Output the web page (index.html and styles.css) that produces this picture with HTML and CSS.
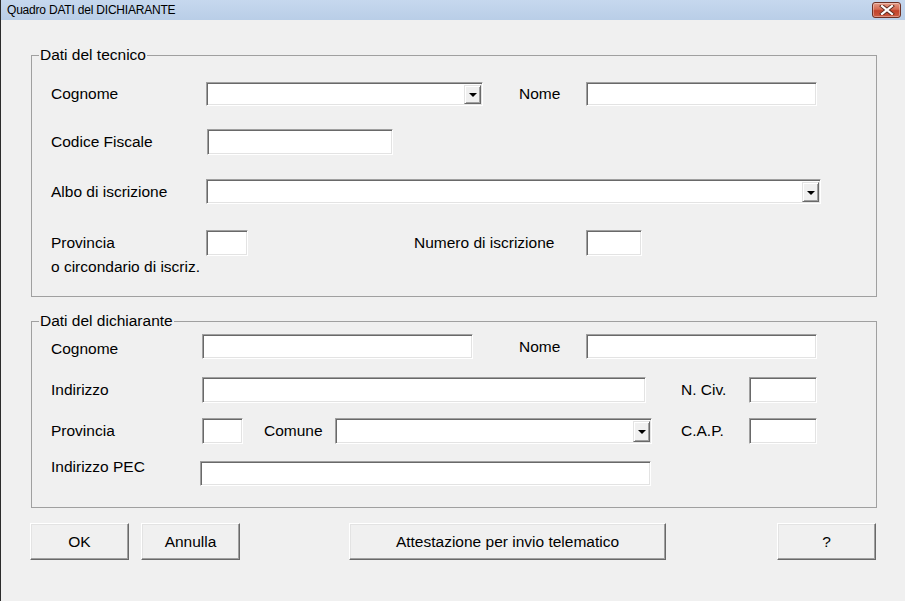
FILE: index.html
```html
<!DOCTYPE html>
<html>
<head>
<meta charset="utf-8">
<link rel="stylesheet" href="styles.css">
</head>
<body>
<div class="window">
  <div class="titlebar">
    <span class="title">Quadro DATI del DICHIARANTE</span>
    <span class="close"><svg width="16" height="10" viewBox="0 0 16 10"><path d="M3 1 L13 9 M13 1 L3 9" stroke="#5a2a20" stroke-width="4" stroke-linecap="square"/><path d="M3 1 L13 9 M13 1 L3 9" stroke="#fff" stroke-width="2.2" stroke-linecap="square"/></svg></span>
  </div>
  <div class="content">
    <div class="group g1">
      <div class="legend"><span>Dati del tecnico</span></div>
      <div class="row r1">
        <span class="lbl w155">Cognome</span>
        <div class="combo w277"><span class="drop"></span></div>
        <span class="lbl w67 ml36">Nome</span>
        <div class="field w231"></div>
      </div>
      <div class="row r2">
        <span class="lbl w156">Codice Fiscale</span>
        <div class="field w186"></div>
      </div>
      <div class="row r3">
        <span class="lbl w155">Albo di iscrizione</span>
        <div class="combo w615"><span class="drop"></span></div>
      </div>
      <div class="row r4">
        <span class="lbl2 w155">Provincia<br>o circondario di iscriz.</span>
        <div class="field w42"></div>
        <span class="lbl w172 ml166 lh26">Numero di iscrizione</span>
        <div class="field w56"></div>
      </div>
    </div>
    <div class="group g2">
      <div class="legend"><span>Dati del dichiarante</span></div>
      <div class="row s1">
        <span class="lbl w151 dn2">Cognome</span>
        <div class="field w271"></div>
        <span class="lbl w67 ml46">Nome</span>
        <div class="field w231"></div>
      </div>
      <div class="row s2">
        <span class="lbl w151">Indirizzo</span>
        <div class="field w444"></div>
        <span class="lbl w68 ml35">N. Civ.</span>
        <div class="field w68"></div>
      </div>
      <div class="row s3">
        <span class="lbl w151">Provincia</span>
        <div class="field w41"></div>
        <span class="lbl w71 ml21">Comune</span>
        <div class="combo w317"><span class="drop"></span></div>
        <span class="lbl w68 ml29">C.A.P.</span>
        <div class="field w68"></div>
      </div>
      <div class="row s4">
        <span class="lbl w149 up">Indirizzo PEC</span>
        <div class="field w451"></div>
      </div>
    </div>
    <div class="buttons">
      <button class="btn w99">OK</button>
      <button class="btn w99 ml12">Annulla</button>
      <button class="btn w317 ml109">Attestazione per invio telematico</button>
      <button class="btn w99 ml111">?</button>
    </div>
  </div>
</div>
</body>
</html>
```
FILE: styles.css
```css
* { box-sizing: border-box; }
html, body { margin: 0; padding: 0; }
body {
  width: 905px;
  height: 601px;
  overflow: hidden;
  background: #f0f0f0;
  font-family: "Liberation Sans", Arial, sans-serif;
  color: #000;
}
.window {
  width: 905px;
  height: 601px;
  border-left: 1px solid #2b2b2b;
  background: #f0f0f0;
}
.titlebar {
  height: 20px;
  background: linear-gradient(#c6d8ee, #b9cee7);
  display: flex;
  align-items: center;
  justify-content: space-between;
  padding-left: 6px;
  padding-right: 4px;
}
.title {
  font-family: "Liberation Sans", Arial, sans-serif;
  font-size: 12px;
  color: #000;
  letter-spacing: -0.2px;
}
.close {
  width: 29px;
  height: 16px;
  border: 1px solid #6e3024;
  border-radius: 3px;
  background: linear-gradient(#e59c88 0%, #d46a52 45%, #c2422a 55%, #cc5a40 100%);
  box-shadow: inset 0 0 0 1px rgba(255,255,255,0.35);
  display: flex;
  align-items: center;
  justify-content: center;
}
.content {
  padding-top: 35px;
}
.group {
  margin-left: 30px;
  width: 846px;
  border: 1px solid #a0a0a0;
  font-size: 15.5px;
}
.legend {
  height: 0;
  display: flex;
  align-items: center;
  margin-top: -1px;
  margin-left: 7px;
}
.legend span {
  background: #f0f0f0;
  padding: 0 1px;
  line-height: 18px;
  white-space: nowrap;
}
.row {
  display: flex;
  align-items: center;
  padding-left: 19px;
}
.g1 { padding-bottom: 18px; }
.r1 { margin-top: 27px; height: 24px; }
.r2 { margin-top: 23px; height: 26px; }
.r3 { margin-top: 24px; height: 25px; }
.r4 { margin-top: 26px; height: 48px; align-items: flex-start; }
.g2 { margin-top: 24px; padding-bottom: 21px; }
.s1 { margin-top: 13px; height: 25px; }
.s2 { margin-top: 18px; height: 26px; }
.s3 { margin-top: 15px; height: 26px; }
.s4 { margin-top: 17px; height: 25px; align-items: flex-start; }

.lbl { white-space: nowrap; flex: none; line-height: 18px; }
.lbl2 { flex: none; line-height: 24px; white-space: nowrap; margin-top: 1px; }
.lh26 { line-height: 26px; }
.up { line-height: 14px; margin-top: -1px; }
.dn2 { position: relative; top: 2px; }

.field, .combo {
  flex: none;
  height: 100%;
  background: #fff;
  border-top: 1px solid #a0a0a0;
  border-left: 1px solid #a0a0a0;
  border-bottom: 1px solid #fff;
  border-right: 1px solid #fff;
  box-shadow: inset 1px 1px 0 #696969, inset -1px -1px 0 #e3e3e3;
}
.r4 .field { height: 26px; }
.combo {
  display: flex;
  justify-content: flex-end;
  padding: 2px 1px 1px 2px;
}
.drop {
  width: 17px;
  height: 100%;
  background: #f0f0f0;
  border-top: 1px solid #e3e3e3;
  border-left: 1px solid #e3e3e3;
  border-right: 1px solid #696969;
  border-bottom: 1px solid #696969;
  box-shadow: inset 1px 1px 0 #fff, inset -1px -1px 0 #a0a0a0;
  display: flex;
  align-items: center;
  justify-content: center;
}
.drop::after {
  content: "";
  width: 0;
  height: 0;
  border-left: 4px solid transparent;
  border-right: 4px solid transparent;
  border-top: 4px solid #000;
  margin-top: 1px;
}

.buttons {
  display: flex;
  margin-top: 15px;
  margin-left: 29px;
  height: 37px;
}
.btn {
  flex: none;
  height: 37px;
  font-family: "Liberation Sans", Arial, sans-serif;
  font-size: 15.5px;
  color: #000;
  background: #f0f0f0;
  border-top: 1px solid #fff;
  border-left: 1px solid #fff;
  border-right: 1px solid #696969;
  border-bottom: 1px solid #696969;
  box-shadow: inset -1px -1px 0 #a0a0a0, inset 1px 1px 0 #e3e3e3;
  padding: 0;
  margin-top: 0;
}

.w41 { width: 41px; } .w42 { width: 42px; } .w56 { width: 56px; }
.w67 { width: 67px; } .w68 { width: 68px; } .w71 { width: 71px; }
.w99 { width: 99px; } .w149 { width: 149px; } .w151 { width: 151px; }
.w155 { width: 155px; } .w156 { width: 156px; } .w172 { width: 172px; }
.w186 { width: 186px; } .w231 { width: 231px; } .w271 { width: 271px; }
.w277 { width: 277px; } .w317 { width: 317px; } .w444 { width: 444px; }
.w451 { width: 451px; } .w615 { width: 615px; }
.ml12 { margin-left: 12px; } .ml21 { margin-left: 21px; } .ml29 { margin-left: 29px; }
.ml35 { margin-left: 35px; } .ml36 { margin-left: 36px; } .ml46 { margin-left: 46px; }
.ml109 { margin-left: 109px; } .ml111 { margin-left: 111px; } .ml166 { margin-left: 166px; }
```
